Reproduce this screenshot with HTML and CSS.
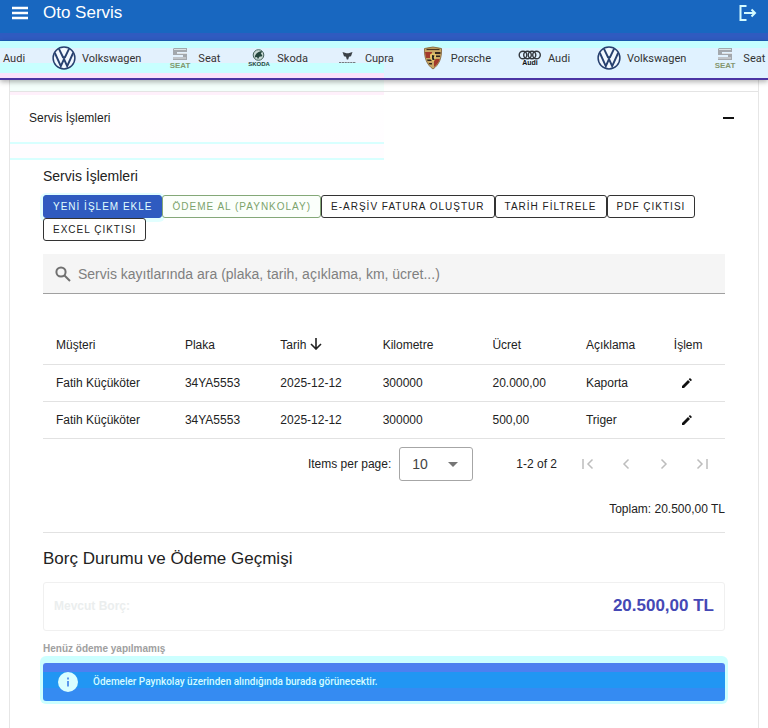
FILE: index.html
```html
<!DOCTYPE html>
<html lang="tr">
<head>
  <meta charset="UTF-8" />
  <title>Oto Servis</title>
  <meta name="viewport" content="width=device-width, initial-scale=1.0" />
  <link rel="stylesheet" href="styles.css">
</head>
<body>
  <!-- shared logos -->
  <svg class="defs" width="0" height="0" aria-hidden="true">
    <symbol id="logo-vw" viewBox="0 0 24 24">
      <circle cx="12" cy="12" r="10.9" fill="#f2f8ff" stroke="#27406f" stroke-width="1.5" />
      <path d="M7 2.8l4 8.4h2l4-8.4M2.9 7l5.9 13.2L12 13l3.2 7.2L21.1 7" fill="none" stroke="#27406f" stroke-width="1.9" />
    </symbol>
    <symbol id="logo-seat" viewBox="0 0 24 24">
      <path d="M6 2h13v4H9v2h10v6H5v-3h10V9H5V3z" fill="#a3a8ad" />
      <path d="M6 3.500h12M9 7.500h10M5 12h13" stroke="#dde1e4" stroke-width="1" />
      <text x="12" y="22" text-anchor="middle" class="seat-word">SEAT</text>
    </symbol>
    <symbol id="logo-skoda" viewBox="0 0 24 24">
      <circle cx="11.500" cy="9" r="5.300" fill="#c7d8d4" stroke="#44635c" stroke-width="1" />
      <path d="M7.500 11.500c1-4 4-6.500 8-6.200-1 1-1.500 1.800-1.700 2.700 1 .4 1.500 1.200 1.500 2.200l-3 .6-1.300 2.400-1-2.200z" fill="#23463d" />
      <text x="12" y="20" text-anchor="middle" class="skoda-word">SKODA</text>
    </symbol>
    <symbol id="logo-cupra" viewBox="0 0 24 24">
      <path d="M7.500 6l4 1.200h2l4-1.200-1.500 4.300-2 .4-.8 2.800h-1.400l-.8-2.800-2-.4z" fill="#3c4247" />
      <path d="M4 16.500h17" stroke="#777c80" stroke-width="1.200" stroke-dasharray="2.200 .6" />
    </symbol>
    <symbol id="logo-porsche" viewBox="0 0 24 24">
      <path d="M3.500 2.500Q12-.5 20.500 2.500C21 12 18 19 12 23 6 19 3 12 3.500 2.500z" fill="#c9a765" stroke="#7a5c33" stroke-width=".8" />
      <path d="M4 6h7v6H5zM13 13h5.800c-1.200 3.500-3 6-5.800 8z" fill="#a33a2c" />
      <path d="M14 6h5.500v2H14zM14 9.500h5V11h-5zM6 13.500h5V15H6.500zM7.500 17H11v1.500H8.500z" fill="#33271f" />
      <path d="M9 8.500Q12 6 15 8.500q.5 5-3 7.500-3.500-2.500-3-7.500z" fill="#e3c36b" />
      <path d="M11 9l2.500.5-.8 2 1 2.500h-2.200l-.5-2z" fill="#222" />
      <path d="M5.500 3.500h13" stroke="#4a3420" stroke-width="1.200" />
    </symbol>
    <symbol id="logo-audi" viewBox="0 0 24 24">
      <g fill="none" stroke="#33383d" stroke-width="1.400">
        <circle cx="5" cy="9" r="3.800" /><circle cx="9.500" cy="9" r="3.800" />
        <circle cx="14" cy="9" r="3.800" /><circle cx="18.500" cy="9" r="3.800" />
      </g>
      <text x="12" y="19" text-anchor="middle" class="audi-word">Audi</text>
    </symbol>
  </svg>

  <header class="app-bar">
    <button class="icon-btn" aria-label="Menü">
      <svg width="18" height="18" viewBox="0 0 18 18"><path d="M1 4h16M1 9h16M1 14h16" stroke="currentColor" stroke-width="2.400" /></svg>
    </button>
    <span class="app-title">Oto Servis</span>
    <button class="icon-btn logout" aria-label="Çıkış">
      <svg width="18" height="18" viewBox="0 0 18 18" fill="none" stroke="currentColor" stroke-width="2"><path d="M7.500 2H1.500v14h6M5 9h10.500M12.500 5.500L16 9l-3.500 3.500" /></svg>
    </button>
  </header>

  <div class="brands">
    <ul class="brand-track">
      <li>Audi</li>
      <li><svg><use href="#logo-vw" /></svg>Volkswagen</li>
      <li><svg><use href="#logo-seat" /></svg>Seat</li>
      <li><svg><use href="#logo-skoda" /></svg>Skoda</li>
      <li><svg><use href="#logo-cupra" /></svg>Cupra</li>
      <li><svg><use href="#logo-porsche" /></svg>Porsche</li>
      <li><svg><use href="#logo-audi" /></svg>Audi</li>
      <li><svg><use href="#logo-vw" /></svg>Volkswagen</li>
      <li><svg><use href="#logo-seat" /></svg>Seat</li>
    </ul>
  </div>

  <main class="page">
    <button class="panel-title" aria-expanded="true">
      <span>Servis İşlemleri</span>
      <svg width="12" height="12" viewBox="0 0 12 12"><path d="M0 6h11" stroke="#111" stroke-width="2" /></svg>
    </button>

    <section class="panel-body">
      <h2 class="subtitle">Servis İşlemleri</h2>
      <div class="actions">
        <button class="btn btn-primary">YENİ İŞLEM EKLE</button>
        <button class="btn btn-success">ÖDEME AL (PAYNKOLAY)</button>
        <button class="btn">E-ARŞİV FATURA OLUŞTUR</button>
        <button class="btn">TARİH FİLTRELE</button>
        <button class="btn">PDF ÇIKTISI</button>
        <button class="btn">EXCEL ÇIKTISI</button>
      </div>

      <label class="search">
        <svg width="16" height="16" viewBox="0 0 16 16" fill="none" stroke="#707070" stroke-width="2"><circle cx="6" cy="6" r="4.600" /><path d="M9.500 9.500l5.500 5.500" /></svg>
        <input type="text" aria-label="Ara" placeholder="Servis kayıtlarında ara (plaka, tarih, açıklama, km, ücret...)" />
      </label>

      <table class="records">
        <colgroup>
          <col class="c-customer"><col class="c-plate"><col class="c-date"><col class="c-km"><col class="c-price"><col class="c-desc"><col>
        </colgroup>
        <thead>
          <tr>
            <th>Müşteri</th>
            <th>Plaka</th>
            <th>Tarih <svg class="sort" width="12" height="12" viewBox="0 0 12 12" fill="none" stroke="#222" stroke-width="1.600"><path d="M6 0v11M1 6l5 5 5-5" /></svg></th>
            <th>Kilometre</th>
            <th>Ücret</th>
            <th>Açıklama</th>
            <th>İşlem</th>
          </tr>
        </thead>
        <tbody>
          <tr>
            <td>Fatih Küçüköter</td><td>34YA5553</td><td>2025-12-12</td><td>300000</td><td>20.000,00</td><td>Kaporta</td>
            <td><button class="edit" aria-label="Düzenle"><svg width="10" height="10" viewBox="0 0 10 10"><path d="M0 10V8l6-6 2 2-6 6zM6.700 1.300L8 0l2 2-1.300 1.300z" fill="#111" /></svg></button></td>
          </tr>
          <tr>
            <td>Fatih Küçüköter</td><td>34YA5553</td><td>2025-12-12</td><td>300000</td><td>500,00</td><td>Triger</td>
            <td><button class="edit" aria-label="Düzenle"><svg width="10" height="10" viewBox="0 0 10 10"><path d="M0 10V8l6-6 2 2-6 6zM6.700 1.300L8 0l2 2-1.300 1.300z" fill="#111" /></svg></button></td>
          </tr>
        </tbody>
      </table>

      <div class="pager">
        <label for="perPage">Items per page:</label>
        <div class="select-wrap">
          <select id="perPage"><option>10</option><option>25</option><option>50</option></select>
        </div>
        <span class="range">1-2 of 2</span>
        <div class="pager-nav">
          <button disabled aria-label="First"><svg width="12" height="12" viewBox="0 0 12 12"><path d="M1 1v10M10.500 1.500L6 6l4.500 4.500" /></svg></button>
          <button disabled aria-label="Previous"><svg width="12" height="12" viewBox="0 0 12 12"><path d="M8.500 1.500L4 6l4.500 4.500" /></svg></button>
          <button disabled aria-label="Next"><svg width="12" height="12" viewBox="0 0 12 12"><path d="M3.500 1.500L8 6l-4.500 4.500" /></svg></button>
          <button disabled aria-label="Last"><svg width="12" height="12" viewBox="0 0 12 12"><path d="M1.500 1.500L6 6l-4.500 4.500M11 1v10" /></svg></button>
        </div>
      </div>

      <p class="total">Toplam: 20.500,00 TL</p>

      <h2 class="debt-title">Borç Durumu ve Ödeme Geçmişi</h2>
      <div class="debt-card">
        <span class="debt-label">Mevcut Borç:</span>
        <span class="debt-amount">20.500,00 TL</span>
      </div>
      <p class="no-payment">Henüz ödeme yapılmamış</p>
      <div class="alert">
        <svg width="20" height="20" viewBox="0 0 20 20"><circle cx="10" cy="10" r="10" fill="#d9feff" /><path d="M10 9v5.500M10 5.500v2" stroke="#3d7fe8" stroke-width="1.600" /></svg>
        <span>Ödemeler Paynkolay üzerinden alındığında burada görünecektir.</span>
      </div>
    </section>
  </main>
</body>
</html>
```
FILE: styles.css
```css
* { box-sizing: border-box; }
body {
  margin: 0;
  min-height: 100vh;
  display: flex;
  flex-direction: column;
  background: #fff;
  color: #222;
  font-family: "Liberation Sans", Arial, sans-serif;
  font-size: 12px;
  overflow-x: hidden;
}
button, input, select { font: inherit; color: inherit; }
button { cursor: pointer; }
h2, p { margin: 0; font-weight: normal; }
.defs { display: none; }

/* top bar */
.app-bar {
  display: flex;
  align-items: center;
  gap: 14px;
  height: 41px;
  padding: 0 11px 15px;
  background: linear-gradient(#1867c0 33px, #2f5bc0 33px);
  border-bottom: 1px solid #1c5fb8;
  color: #fff;
}
.icon-btn {
  display: flex;
  padding: 0;
  border: 0;
  background: none;
}
.app-title { font-size: 17px; line-height: 26px; }
.logout { margin-left: auto; color: #d4fbff; }

/* brand strip */
.brands {
  position: relative;
  z-index: 1;
  height: 39px;
  overflow: hidden;
  background:
    linear-gradient(#c4ffff 7px, #e3f1fd 7px, #e3f1fd 22px, #c8ffff 22px, #c8ffff 32px, #fbe3fb 32px) 0 0 / 50% 100% no-repeat,
    linear-gradient(#c4ffff 7px, #e0f2ff 7px);
  border-bottom: 2px solid #4a35a4;
  box-shadow: 0 2px 5px rgba(0, 0, 0, 0.3);
}
.brand-track {
  display: flex;
  gap: 27px;
  margin: 0;
  padding: 5px 0 0 3px;
  list-style: none;
}
.brand-track li {
  display: flex;
  align-items: center;
  gap: 6px;
  font-family: Roboto, "Liberation Sans", sans-serif;
  font-size: 11px;
  white-space: nowrap;
  color: #333;
}
.brand-track svg { width: 24px; height: 24px; flex: none; }
.seat-word { font: bold 8px "Liberation Sans", sans-serif; fill: #84976f; }
.skoda-word { font: bold 6px "Liberation Sans", sans-serif; fill: #27443c; }
.audi-word { font: bold 7px "Liberation Sans", sans-serif; fill: #111; }

/* page */
.page {
  flex: 1;
  margin: 0 9px;
  padding-top: 11px;
  border: 1px solid #e6e6e6;
  border-width: 0 1px;
  background: linear-gradient(#f3fffb 11px, #fff0fb 11px, #fff0fb 15px, #fff 15px, #fffdff 62px, #d8ffff 62px, #d8ffff 64px, #fffcff 64px, #fffcff 78px, #d8ffff 78px, #d8ffff 80px, #fff 80px) 0 0 / 50% 100% no-repeat;
}
.panel-title {
  display: flex;
  align-items: center;
  justify-content: space-between;
  width: 100%;
  height: 52px;
  padding: 0 23px 0 19px;
  border: 0;
  border-top: 1px solid #e4e4e4;
  background: none;
  text-align: left;
}
.panel-body { padding: 23px 33px 28px; }
.subtitle { font-size: 14px; line-height: 20px; }

.actions {
  display: flex;
  flex-wrap: wrap;
  margin-top: 9px;
}
.btn {
  height: 23px;
  padding: 0 9px;
  border: 1px solid #333;
  border-radius: 3px;
  background: #fff;
  font-size: 10px;
  letter-spacing: 1px;
}
.btn-primary {
  background: #2f5bc0;
  border-color: #2f5bc0;
  color: #e2ffff;
  box-shadow: 0 1px 0 3px #e2ffff;
}
.btn-success { border-color: #84a878; color: #7ba36c; background: #fbfffb; }

.search {
  display: flex;
  align-items: center;
  gap: 7px;
  height: 40px;
  margin-top: 13px;
  padding: 0 12px;
  background: #f5f5f5;
  border-bottom: 1px solid #a0a0a0;
}
.search input {
  flex: 1;
  padding: 0;
  border: 0;
  outline: none;
  background: none;
  font-size: 14px;
}
.search input::placeholder { color: #808080; }

/* records table */
.records {
  width: 100%;
  margin-top: 29px;
  table-layout: fixed;
  border-collapse: collapse;
}
.records th, .records td {
  height: 37px;
  padding: 0 13px;
  border-bottom: 1px solid #e2e2e2;
  text-align: left;
  font-weight: normal;
  white-space: nowrap;
}
.records th { height: 41px; padding-top: 3px; }
.c-customer { width: 18.9%; }
.c-plate { width: 14%; }
.c-date { width: 15%; }
.c-km { width: 16.1%; }
.c-price { width: 13.7%; }
.c-desc { width: 12.9%; }
.sort { vertical-align: -1px; }
.edit {
  display: flex;
  padding: 0 8px;
  border: 0;
  background: none;
}

.pager {
  display: flex;
  align-items: center;
  justify-content: flex-end;
  height: 50px;
}
.select-wrap {
  position: relative;
  margin: 0 43px 0 8px;
}
.select-wrap::after {
  content: "";
  position: absolute;
  right: 15px;
  top: 15px;
  border: 5px solid transparent;
  border-top-color: #757575;
  border-bottom: 0;
  pointer-events: none;
}
.select-wrap select {
  width: 74px;
  height: 34px;
  padding: 0 12px;
  border: 1px solid #a6a6a6;
  border-radius: 3px;
  background: #fff;
  font-size: 14px;
  color: #444;
  appearance: none;
}
.pager-nav { display: flex; margin-left: 12px; padding-right: 4px; }
.pager-nav button {
  display: flex;
  justify-content: center;
  width: 38px;
  padding: 0;
  border: 0;
  background: none;
}
.pager-nav path { fill: none; stroke: #bdbdbd; stroke-width: 1.5; }

.total {
  padding: 12px 0 15px;
  line-height: 16px;
  text-align: right;
  border-bottom: 1px solid #e2e2e2;
}

/* debt */
.debt-title { margin-top: 15px; font-size: 17px; line-height: 22px; }
.debt-card {
  display: flex;
  align-items: center;
  justify-content: space-between;
  height: 49px;
  margin-top: 12px;
  padding: 0 10px;
  border: 1px solid #f0f0f0;
  border-radius: 3px;
  font-weight: bold;
}
.debt-label { color: #ebeeee; }
.debt-amount { font-size: 17px; color: #4548b5; }
.no-payment {
  margin-top: 11px;
  font-size: 10px;
  line-height: 14px;
  font-weight: bold;
  color: #a0a0a0;
}
.alert {
  display: flex;
  align-items: center;
  gap: 15px;
  height: 38px;
  margin-top: 7px;
  padding: 0 15px;
  border-radius: 3px;
  background: linear-gradient(#4d80f0 9px, #2196f3 9px, #2196f3 25px, #358bf2 25px);
  box-shadow: 0 0 0 3px #ccffff, 0 -4px 0 3px #ccffff;
  color: #d4fbff;
  font-family: Roboto, "Liberation Sans", sans-serif;
  font-size: 10px;
  font-weight: 500;
}
```
